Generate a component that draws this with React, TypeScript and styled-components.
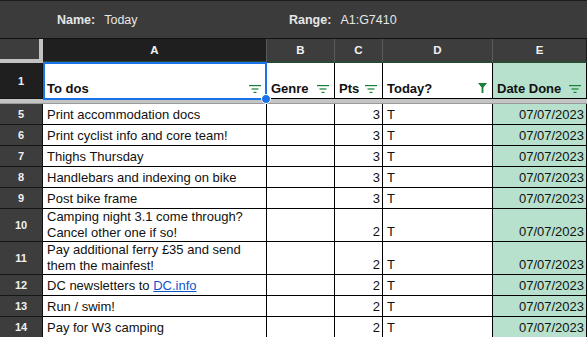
import React from 'react';
import styled, { createGlobalStyle } from 'styled-components';

const GlobalStyle = createGlobalStyle`
	html, body {
		margin: 0;
		padding: 0;
		background: #ffffff;
	}
	body {
		font-family: 'Liberation Sans', Arial, sans-serif;
		overflow: hidden;
	}
`;

const COLUMNS = '43px 224px 68px 48px 110px 94px';

type Task = {
	row: number;
	lines: string[];
	link?: string;
	pts: number;
	tall?: boolean;
};

const tasks: Task[] = [
	{ row: 5, lines: ['Print accommodation docs'], pts: 3 },
	{ row: 6, lines: ['Print cyclist info and core team!'], pts: 3 },
	{ row: 7, lines: ['Thighs Thursday'], pts: 3 },
	{ row: 8, lines: ['Handlebars and indexing on bike'], pts: 3 },
	{ row: 9, lines: ['Post bike frame'], pts: 3 },
	{
		row: 10,
		lines: ['Camping night 3.1 come through?', 'Cancel other one if so!'],
		pts: 2,
		tall: true,
	},
	{
		row: 11,
		lines: ['Pay additional ferry £35 and send', 'them the mainfest!'],
		pts: 2,
		tall: true,
	},
	{ row: 12, lines: ['DC newsletters to '], link: 'DC.info', pts: 2 },
	{ row: 13, lines: ['Run / swim!'], pts: 2 },
	{ row: 14, lines: ['Pay for W3 camping'], pts: 2 },
];

const FilterLines = () => (
	<svg width="12" height="8" viewBox="0 0 12 8">
		<rect x="0" y="0" width="12" height="1.2" fill="#188038" />
		<rect x="2.5" y="3.4" width="7" height="1.2" fill="#188038" />
		<rect x="4.5" y="6.8" width="3" height="1.2" fill="#188038" />
	</svg>
);

const FilterFunnel = () => (
	<svg width="9" height="10" viewBox="0 0 9 10">
		<path d="M0 0H9L5.4 4.4V10H3.6V4.4Z" fill="#188038" />
	</svg>
);

const App = () => {
	return (
		<>
			<GlobalStyle />
			<TopBar>
				<Field $width={232}>
					<Label>Name:</Label>
					<Value>Today</Value>
				</Field>
				<Field>
					<Label>Range:</Label>
					<Value>A1:G7410</Value>
				</Field>
			</TopBar>

			<Sheet>
				<Row $height={24}>
					<Corner />
					<ColHeader $active>A</ColHeader>
					<ColHeader>B</ColHeader>
					<ColHeader>C</ColHeader>
					<ColHeader>D</ColHeader>
					<ColHeader>E</ColHeader>
				</Row>

				<Row $height={36}>
					<RowNum $active>1</RowNum>
					<HeadCell>
						<span>To dos</span>
						<FilterLines />
					</HeadCell>
					<HeadCell>
						<span>Genre</span>
						<FilterLines />
					</HeadCell>
					<HeadCell>
						<span>Pts</span>
						<FilterLines />
					</HeadCell>
					<HeadCell>
						<span>Today?</span>
						<FilterFunnel />
					</HeadCell>
					<HeadCell $done>
						<span>Date Done</span>
						<FilterLines />
					</HeadCell>
				</Row>

				<FreezeBar />

				{tasks.map((t) => (
					<Row key={t.row} $height={t.tall ? 33 : 21}>
						<RowNum>{t.row}</RowNum>
						<Cell $tall={t.tall}>
							<Wrap>
								{t.lines.map((line, i) => (
									<div key={i}>
										{line}
										{t.link && <Link href="#">{t.link}</Link>}
									</div>
								))}
							</Wrap>
						</Cell>
						<Cell />
						<Cell $align="right">{t.pts}</Cell>
						<Cell>T</Cell>
						<Cell $align="right" $done>
							07/07/2023
						</Cell>
					</Row>
				))}

				<Selection>
					<Handle />
				</Selection>
			</Sheet>
		</>
	);
};

const TopBar = styled.div`
	display: flex;
	align-items: center;
	height: 39px;
	padding-left: 57px;
	background: #3b3b3b;
	border-top: 1px solid #1c1c1c;
	border-bottom: 1px solid #121212;
	box-sizing: border-box;
	color: #e6e6e6;
	font-size: 12.5px;
`;

const Field = styled.div<{ $width?: number }>`
	display: flex;
	gap: 9px;
	width: ${(p) => (p.$width ? `${p.$width}px` : 'auto')};
`;

const Label = styled.span`
	font-weight: bold;
`;

const Value = styled.span`
	font-weight: normal;
`;

const Sheet = styled.div`
	position: relative;
`;

const Row = styled.div<{ $height: number }>`
	display: grid;
	grid-template-columns: ${COLUMNS};
	height: ${(p) => p.$height}px;
`;

const Corner = styled.div`
	background: #3d3d3d;
	border-right: 4px solid #c2c2c2;
	border-bottom: 4px solid #c2c2c2;
	box-sizing: border-box;
`;

const ColHeader = styled.div<{ $active?: boolean }>`
	display: flex;
	align-items: center;
	justify-content: center;
	background: ${(p) => (p.$active ? '#1f1f1f' : '#3d3d3d')};
	border-right: 1px solid #5a5a5a;
	border-bottom: 2px solid #2a4a33;
	box-sizing: border-box;
	color: #f2f2f2;
	font-size: 11.5px;
	font-weight: bold;
	&:last-child {
		border-right-color: #1a1a1a;
	}
`;

const RowNum = styled.div<{ $active?: boolean }>`
	display: flex;
	align-items: center;
	justify-content: center;
	background: ${(p) => (p.$active ? '#1f1f1f' : '#3d3d3d')};
	border-right: 1px solid #111;
	border-bottom: 1px solid #161616;
	box-sizing: border-box;
	color: #f0f0f0;
	font-size: 11px;
	font-weight: bold;
`;

const Cell = styled.div<{
	$align?: 'left' | 'right';
	$done?: boolean;
	$tall?: boolean;
}>`
	display: flex;
	align-items: flex-end;
	justify-content: ${(p) => (p.$align === 'right' ? 'flex-end' : 'flex-start')};
	overflow: hidden;
	padding: 0 2px ${(p) => (p.$tall ? 0 : 1)}px 4px;
	background: ${(p) => (p.$done ? '#b7e1cd' : '#ffffff')};
	border-right: 1px solid #000;
	border-bottom: 1px solid #000;
	box-sizing: border-box;
	color: #111;
	font-size: 13px;
	line-height: ${(p) => (p.$tall ? 16 : 17)}px;
	white-space: nowrap;
`;

const Wrap = styled.div`
	display: flex;
	flex-direction: column;
`;

const HeadCell = styled(Cell)`
	justify-content: space-between;
	align-items: flex-end;
	padding: 0 5px 2px 4px;
	font-weight: bold;
	line-height: 15px;
	color: #111;
	svg {
		flex: none;
		margin-bottom: 3px;
	}
`;

const Link = styled.a`
	color: #1155cc;
	text-decoration: underline;
`;

const FreezeBar = styled.div`
	height: 5px;
	background: #c4c4c4;
	border-bottom: 1px solid #9a9a9a;
	box-sizing: border-box;
`;

const Selection = styled.div`
	position: absolute;
	left: 43px;
	top: 23px;
	width: 224px;
	height: 38px;
	border: 2px solid #1a73e8;
	box-sizing: border-box;
	pointer-events: none;
`;

const Handle = styled.div`
	position: absolute;
	right: -6px;
	bottom: -6px;
	width: 8px;
	height: 8px;
	border-radius: 50%;
	background: #1a73e8;
	border: 1px solid #ffffff;
`;

export default App;
